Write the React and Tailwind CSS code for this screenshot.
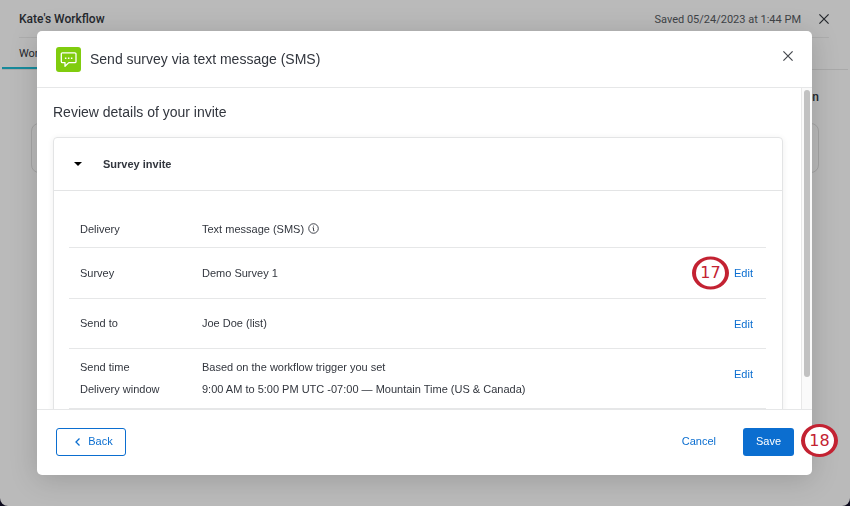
import React from "react";

const rows = [
  { labels: ["Delivery"], values: ["Text message (SMS)"], info: true, height: "h-9" },
  { labels: ["Survey"], values: ["Demo Survey 1"], edit: true, step: 17, height: "h-[51px]" },
  { labels: ["Send to"], values: ["Joe Doe (list)"], edit: true, height: "h-[50px]" },
  {
    labels: ["Send time", "Delivery window"],
    values: [
      "Based on the workflow trigger you set",
      "9:00 AM to 5:00 PM UTC -07:00 — Mountain Time (US & Canada)",
    ],
    edit: true,
    height: "h-[60px]",
  },
];

function CloseIcon() {
  return (
    <svg viewBox="0 0 10 10" className="size-[10px]" fill="none" stroke="currentColor" strokeWidth="1.2" aria-hidden="true">
      <path d="M.4.4l9.2 9.2M9.6.4L.4 9.6" />
    </svg>
  );
}

function InfoIcon() {
  return (
    <svg viewBox="0 0 12 12" className="size-[11px] shrink-0" fill="none" stroke="#32363e" strokeWidth="1" aria-hidden="true">
      <circle cx="6" cy="6" r="5.2" />
      <path d="M5 5.200h1v3.200h1M5.500 3.400h1" />
    </svg>
  );
}

function MessageIcon() {
  return (
    <svg viewBox="0 0 25 25" className="size-[25px] shrink-0" fill="none" aria-hidden="true">
      <rect width="25" height="25" rx="3" fill="#80cc0e" />
      <path
        d="M6.500 5.800h12.300a1.200 1.200 0 0 1 1.200 1.200v7.400a1.200 1.200 0 0 1-1.200 1.200H12.800L9 19.200v-3.600H6.500a1.200 1.200 0 0 1-1.200-1.200V7a1.200 1.200 0 0 1 1.200-1.200z"
        stroke="#fff"
        strokeWidth="1.3"
        strokeLinejoin="round"
      />
      <path d="M8.900 11.200h1.500M11.900 11.200h1.500M14.900 11.200h1.500" stroke="#fff" strokeWidth="1.4" />
    </svg>
  );
}

function StepBadge({ number }) {
  return (
    <span className="flex h-[33px] w-[37px] items-center justify-center rounded-[50%] border-x-4 border-y-3 border-[#c32232] bg-white font-['DejaVu_Sans',sans-serif] text-[16px] leading-none text-[#c32232]">
      {number}
    </span>
  );
}

function WorkflowPage() {
  return (
    <div className="min-h-screen rounded-b-lg bg-[#bababa] font-[Roboto,sans-serif] text-[#25282d]">
      <header className="mr-[21px] ml-[19px] flex h-[38px] items-center border-b border-[#adadad]">
        <h1 className="text-[12px] font-medium">Kate's Workflow</h1>
        <span className="ml-auto pt-[3px] text-[11px] text-[#404347]">Saved 05/24/2023 at 1:44 PM</span>
        <button type="button" aria-label="Close workflow" className="ml-[18px]">
          <CloseIcon />
        </button>
      </header>
      <nav className="mx-[2px] flex h-8 border-b border-[#a9a9a9]">
        <a href="#workflow" className="flex items-center border-b-2 border-[#178a9b] px-[17px] pt-1 text-[11px]">
          Workflow
        </a>
      </nav>
      <div className="mx-[31px] flex h-[53px] items-center justify-end text-[12px] font-medium">Action</div>
      <div className="mx-[31px] h-[50px] rounded-lg border border-[#a4a4a4]" />
    </div>
  );
}

function InviteTable() {
  return (
    <div className="pt-5 pr-4 pb-8 pl-[15px]">
      <table className="w-full border-collapse text-left text-[11px] leading-[22px]">
        <tbody>
          {rows.map((row) => (
            <tr key={row.labels[0]} className={`border-b border-[#e6e7e8] ${row.height}`}>
              <th scope="row" className="w-[133px] pl-[11px] font-normal">
                {row.labels.map((label) => (
                  <div key={label}>{label}</div>
                ))}
              </th>
              <td>
                {row.values.map((value) => (
                  <div key={value} className="flex items-center gap-1">
                    {value}
                    {row.info && <InfoIcon />}
                  </div>
                ))}
              </td>
              <td className="w-24 pt-[14px] pr-[13px] align-top">
                <div className="relative flex justify-end">
                  {row.step && (
                    <span className="absolute top-1/2 right-6 -translate-y-1/2">
                      <StepBadge number={row.step} />
                    </span>
                  )}
                  {row.edit && (
                    <button type="button" aria-label={`Edit ${row.labels[0]}`} className="text-[#0b6ed0]">
                      Edit
                    </button>
                  )}
                </div>
              </td>
            </tr>
          ))}
        </tbody>
      </table>
    </div>
  );
}

function InviteDialog() {
  return (
    <section
      role="dialog"
      aria-modal="true"
      aria-labelledby="dialog-title"
      className="relative flex min-w-0 flex-1 flex-col rounded-[5px] bg-white text-[#32363e] shadow-[0_4px_28px_rgba(0,0,0,0.17)]"
    >
      <header className="flex h-[57px] shrink-0 items-center border-b border-[#e6e7e8] px-[19px]">
        <MessageIcon />
        <h2 id="dialog-title" className="ml-[9px] text-[14px]">
          Send survey via text message (SMS)
        </h2>
        <button type="button" aria-label="Close" className="mb-[6px] ml-auto text-[#44474d]">
          <CloseIcon />
        </button>
      </header>

      <div className="flex min-h-0 flex-1">
        <div className="min-w-0 flex-1 overflow-hidden pr-[18px] pl-4">
          <h3 className="flex h-[49px] items-center text-[14px]">Review details of your invite</h3>
          <div className="rounded border border-[#e3e4e5] shadow-[0_1px_6px_rgba(0,0,0,0.07)]">
            <button type="button" aria-expanded="true" className="flex h-[53px] w-full items-center border-b border-[#e3e4e5] pl-5 text-[11px] font-bold">
              <svg viewBox="0 0 8 4" className="mr-[21px] h-1 w-2" fill="#000" aria-hidden="true">
                <path d="M0 0h8L4 4z" />
              </svg>
              Survey invite
            </button>
            <InviteTable />
          </div>
        </div>
        <div className="w-[11px] shrink-0 border-l border-[#e8e8e8] bg-[#fafafa] px-[2px] pt-[2px]">
          <div className="h-[90%] rounded-full bg-[#c1c1c1]" />
        </div>
      </div>

      <footer className="flex h-[66px] shrink-0 items-center border-t border-[#e6e7e8] pr-[18px] pb-[2px] pl-[19px] text-[11px]">
        <button type="button" className="flex h-7 w-[70px] items-center justify-center gap-2 rounded-[3px] border border-[#0b6ed0] pl-[6px] text-[#0b6ed0]">
          <svg viewBox="0 0 5 8" className="h-2 w-[5px]" fill="none" stroke="currentColor" strokeWidth="1.3" aria-hidden="true">
            <path d="M4.500.500L1 4l3.500 3.500" />
          </svg>
          Back
        </button>
        <button type="button" className="ml-auto text-[#0b6ed0]">
          Cancel
        </button>
        <button type="button" className="ml-[27px] h-7 w-[51px] rounded-[3px] bg-[#0b6ed0] text-white">
          Save
        </button>
      </footer>
      <span className="absolute right-[-26px] bottom-[18px]">
        <StepBadge number={18} />
      </span>
    </section>
  );
}

export default function App() {
  return (
    <main className="min-h-screen bg-[#0c0a1c] font-['Liberation_Sans',Arial,sans-serif]">
      <WorkflowPage />
      <div className="fixed inset-0 flex py-[31px] pr-[38px] pl-[37px]">
        <InviteDialog />
      </div>
    </main>
  );
}
